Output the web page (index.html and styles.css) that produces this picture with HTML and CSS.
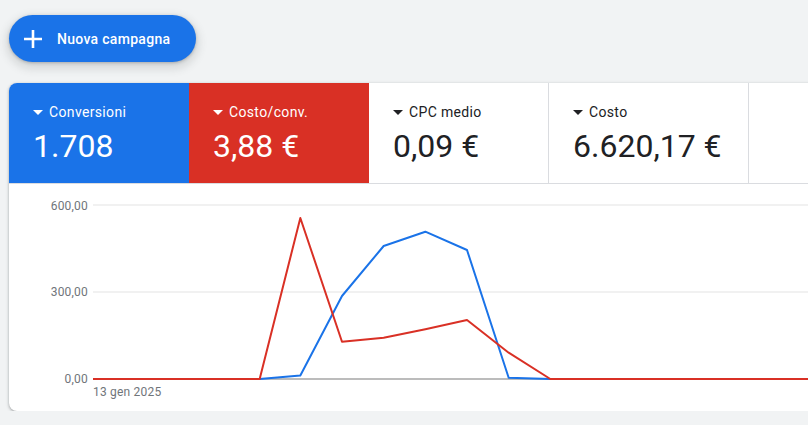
FILE: index.html
```html
<!DOCTYPE html>
<html lang="it">
<head>
<meta charset="utf-8">
<title>Campagne</title>
<link rel="stylesheet" href="styles.css">
</head>
<body>
<div class="page">
  <button class="new-btn" type="button">
    <svg class="plus" width="18" height="18" viewBox="0 0 18 18"><path d="M0 9H18M9 0V18" stroke="#fff" stroke-width="2.6" fill="none"/></svg>
    <span>Nuova campagna</span>
  </button>

  <div class="card">
    <div class="tiles">
      <div class="tile tile-blue">
        <div class="label"><span class="caret"></span>Conversioni</div>
        <div class="value">1.708</div>
      </div>
      <div class="tile tile-red">
        <div class="label"><span class="caret"></span>Costo/conv.</div>
        <div class="value">3,88 €</div>
      </div>
      <div class="tile">
        <div class="label"><span class="caret"></span>CPC medio</div>
        <div class="value">0,09 €</div>
      </div>
      <div class="tile">
        <div class="label"><span class="caret"></span>Costo</div>
        <div class="value">6.620,17 €</div>
      </div>
      <div class="tile tile-empty"></div>
    </div>
    <svg class="chart" width="830" height="227" viewBox="0 0 830 227">
      <line x1="84" y1="21" x2="830" y2="21" stroke="#e3e3e3" stroke-width="1.2"/>
      <line x1="84" y1="108" x2="830" y2="108" stroke="#e3e3e3" stroke-width="1.2"/>
      <line x1="84" y1="195" x2="830" y2="195" stroke="#a6a6a6" stroke-width="1.4"/>
      <text class="axis" x="79" y="25.5" text-anchor="end">600,00</text>
      <text class="axis" x="79" y="112" text-anchor="end">300,00</text>
      <text class="axis" x="79" y="199" text-anchor="end">0,00</text>
      <text class="axis" x="84" y="212">13 gen 2025</text>
      <polyline fill="none" stroke="#1a73e8" stroke-width="2" stroke-linejoin="round"
        points="84,195 250.67,195 291.33,191.5 333,112 374.67,62 416.33,47.7 458,66 499.67,193.7 541.33,195 830,195"/>
      <polyline fill="none" stroke="#d93025" stroke-width="2" stroke-linejoin="round"
        points="84,195 250.67,195 291.33,34 333,157.7 374.67,153.7 416.33,145.3 458,136 499.67,168.7 541.33,195 830,195"/>
    </svg>
  </div>
</div>
</body>
</html>
```
FILE: styles.css
```css
html, body {
  margin: 0;
  padding: 0;
  background: #f1f3f4;
  overflow: hidden;
  font-family: Roboto, "Liberation Sans", Arial, sans-serif;
  color: #202124;
}

.page {
  padding: 15px 0 0 9px;
  width: 840px;
}

.new-btn {
  display: flex;
  align-items: center;
  gap: 15px;
  width: 187px;
  height: 47px;
  padding: 0 0 0 15px;
  border: none;
  border-radius: 24px;
  background: #1a73e8;
  color: #fff;
  font-family: Roboto, "Liberation Sans", Arial, sans-serif;
  font-size: 14px;
  font-weight: 500;
  letter-spacing: 0.3px;
  box-shadow: 0 1px 3px rgba(60, 64, 67, 0.3), 0 4px 8px 3px rgba(60, 64, 67, 0.15);
}

.plus {
  flex: none;
  width: 18px;
  height: 18px;
}

.card {
  margin-top: 21px;
  width: 830px;
  background: #fff;
  border-radius: 8px;
  overflow: hidden;
  box-shadow: 0 1px 2px rgba(60, 64, 67, 0.3), 0 1px 3px 1px rgba(60, 64, 67, 0.15);
}

.tiles {
  display: flex;
  height: 100px;
  border-bottom: 1px solid #dadce0;
}

.tile {
  flex: none;
  box-sizing: border-box;
  min-width: 180px;
  padding: 19px 26px 0 24px;
  border-right: 1px solid #dadce0;
  background: #fff;
  color: #202124;
}

.tile-blue {
  background: #1a73e8;
  color: #fff;
  border-right: none;
}

.tile-red {
  background: #d93025;
  color: #fff;
  border-right: none;
}

.tile-empty {
  flex: 1;
  min-width: 0;
  border-right: none;
}

.label {
  display: flex;
  align-items: center;
  gap: 6px;
  height: 20px;
  font-size: 14px;
  font-weight: 400;
  letter-spacing: 0.35px;
  line-height: 20px;
  white-space: nowrap;
}

.caret {
  width: 0;
  height: 0;
  border-left: 5px solid transparent;
  border-right: 5px solid transparent;
  border-top: 5px solid currentColor;
}

.value {
  margin-top: 4px;
  font-size: 32px;
  font-weight: 400;
  line-height: 40px;
  white-space: nowrap;
}

.chart {
  display: block;
}

.axis {
  font-family: Roboto, "Liberation Sans", Arial, sans-serif;
  font-size: 12px;
  letter-spacing: 0.2px;
  fill: #70757a;
}
```
